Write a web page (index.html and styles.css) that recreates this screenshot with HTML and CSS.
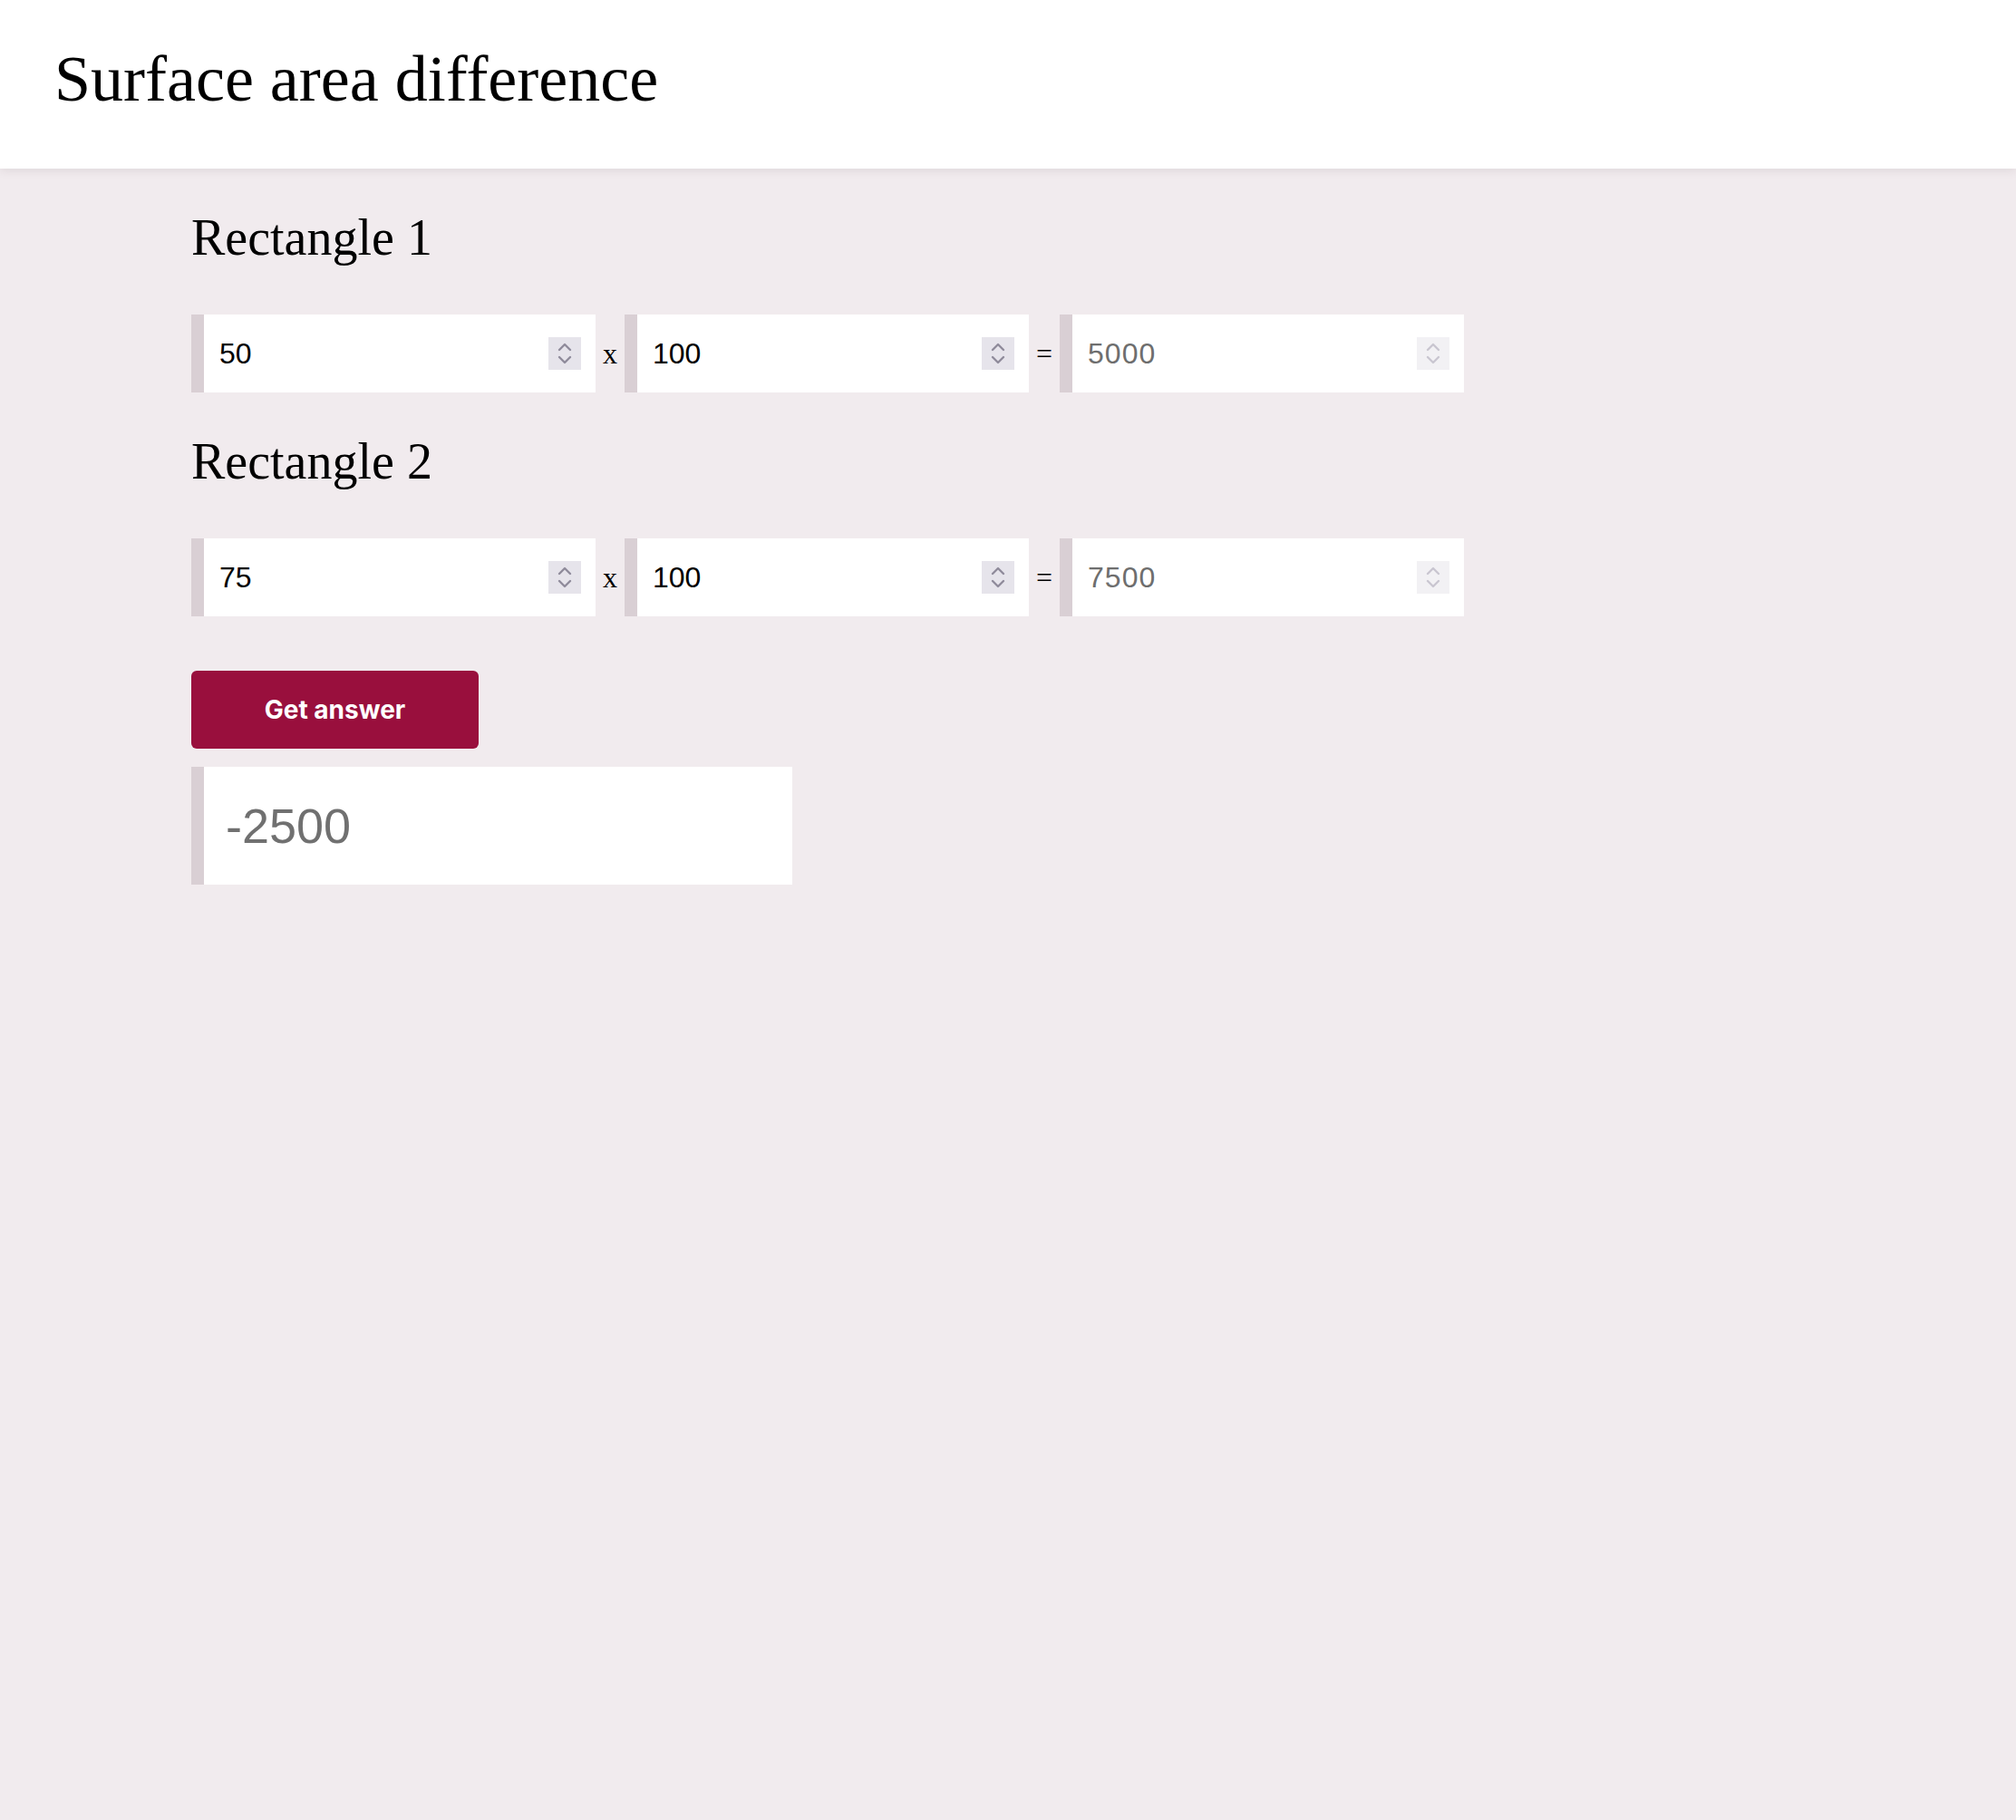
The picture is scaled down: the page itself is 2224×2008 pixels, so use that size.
FILE: index.html
```html
<!DOCTYPE html>
<html lang="en">
<head>
<meta charset="utf-8">
<title>Surface area difference</title>
<link rel="stylesheet" href="styles.css">
</head>
<body>
<header class="topbar">
  <h1 class="title">Surface area difference</h1>
</header>
<main class="content">
  <h2 class="section-title">Rectangle 1</h2>
  <div class="calc-row">
    <div class="field">
      <input class="field-input" type="text" value="50" aria-label="Rectangle 1 width">
      <span class="spin"><svg width="36" height="36" viewBox="0 0 36 36"><path d="M12 14 L18 8 L24 14 M12 22 L18 28 L24 22" fill="none" stroke-width="2.4" stroke-linecap="round" stroke-linejoin="round"/></svg></span>
    </div>
    <span class="op">x</span>
    <div class="field">
      <input class="field-input" type="text" value="100" aria-label="Rectangle 1 height">
      <span class="spin"><svg width="36" height="36" viewBox="0 0 36 36"><path d="M12 14 L18 8 L24 14 M12 22 L18 28 L24 22" fill="none" stroke-width="2.4" stroke-linecap="round" stroke-linejoin="round"/></svg></span>
    </div>
    <span class="op">=</span>
    <div class="field field-disabled">
      <input class="field-input" type="text" value="5000" disabled aria-label="Rectangle 1 area">
      <span class="spin"><svg width="36" height="36" viewBox="0 0 36 36"><path d="M12 14 L18 8 L24 14 M12 22 L18 28 L24 22" fill="none" stroke-width="2.4" stroke-linecap="round" stroke-linejoin="round"/></svg></span>
    </div>
  </div>

  <h2 class="section-title section-title-second">Rectangle 2</h2>
  <div class="calc-row">
    <div class="field">
      <input class="field-input" type="text" value="75" aria-label="Rectangle 2 width">
      <span class="spin"><svg width="36" height="36" viewBox="0 0 36 36"><path d="M12 14 L18 8 L24 14 M12 22 L18 28 L24 22" fill="none" stroke-width="2.4" stroke-linecap="round" stroke-linejoin="round"/></svg></span>
    </div>
    <span class="op">x</span>
    <div class="field">
      <input class="field-input" type="text" value="100" aria-label="Rectangle 2 height">
      <span class="spin"><svg width="36" height="36" viewBox="0 0 36 36"><path d="M12 14 L18 8 L24 14 M12 22 L18 28 L24 22" fill="none" stroke-width="2.4" stroke-linecap="round" stroke-linejoin="round"/></svg></span>
    </div>
    <span class="op">=</span>
    <div class="field field-disabled">
      <input class="field-input" type="text" value="7500" disabled aria-label="Rectangle 2 area">
      <span class="spin"><svg width="36" height="36" viewBox="0 0 36 36"><path d="M12 14 L18 8 L24 14 M12 22 L18 28 L24 22" fill="none" stroke-width="2.4" stroke-linecap="round" stroke-linejoin="round"/></svg></span>
    </div>
  </div>

  <button class="answer-btn" type="button">Get answer</button>
  <div class="result">-2500</div>
</main>
</body>
</html>
```
FILE: styles.css
```css
html, body {
  margin: 0;
  padding: 0;
}

body {
  background: #f1ebee;
  font-family: "Liberation Serif", "Times New Roman", serif;
  font-size: 32px;
  color: #000;
  min-height: 2008px;
}

.topbar {
  background: #ffffff;
  height: 186px;
  box-sizing: border-box;
  padding: 51px 0 0 60px;
  box-shadow: 0 2px 10px rgba(60, 40, 50, 0.10);
  position: relative;
}

.title {
  margin: 0;
  font-size: 72px;
  line-height: 1;
  font-weight: normal;
}

.content {
  padding: 48px 211px 0 211px;
}

.section-title {
  margin: 0 0 57px 0;
  font-size: 56px;
  line-height: 1;
  font-weight: normal;
}

.section-title-second {
  margin-top: 48px;
}

.calc-row {
  display: flex;
  align-items: center;
  gap: 8px;
}

.op {
  font-family: "Liberation Serif", "Times New Roman", serif;
  font-size: 32px;
  line-height: 1;
}

.field {
  width: 446px;
  height: 86px;
  box-sizing: border-box;
  display: flex;
  align-items: center;
  background: #ffffff;
  border-left: 14px solid #d9cfd4;
  padding: 0 16px 0 17px;
}

.field-input {
  flex: 1;
  min-width: 0;
  border: none;
  outline: none;
  background: transparent;
  padding: 0;
  margin: 0;
  font-family: "Liberation Sans", Arial, sans-serif;
  font-size: 32px;
  color: #000;
}

.field-disabled .field-input {
  color: #6e6e6e;
  -webkit-text-fill-color: #6e6e6e;
  letter-spacing: 1px;
}

.spin {
  width: 36px;
  height: 36px;
  flex: none;
  display: block;
  background: #e6e4eb;
}

.spin svg {
  display: block;
  stroke: #8f8b9b;
}

.field-disabled .spin {
  background: #f2f1f4;
}

.field-disabled .spin svg {
  stroke: #c9c6d0;
}

.answer-btn {
  display: block;
  margin-top: 60px;
  width: 317px;
  height: 86px;
  border: none;
  border-radius: 6px;
  background: #990f3d;
  color: #ffffff;
  font-family: Inter, "Liberation Sans", sans-serif;
  font-weight: 700;
  font-size: 28px;
  padding: 0;
  cursor: pointer;
}

.result {
  margin-top: 20px;
  width: 663px;
  height: 130px;
  box-sizing: border-box;
  background: #ffffff;
  border-left: 14px solid #d9cfd4;
  padding-left: 24px;
  display: flex;
  align-items: center;
  font-family: "Liberation Sans", Arial, sans-serif;
  font-size: 54px;
  color: #707070;
}
```
